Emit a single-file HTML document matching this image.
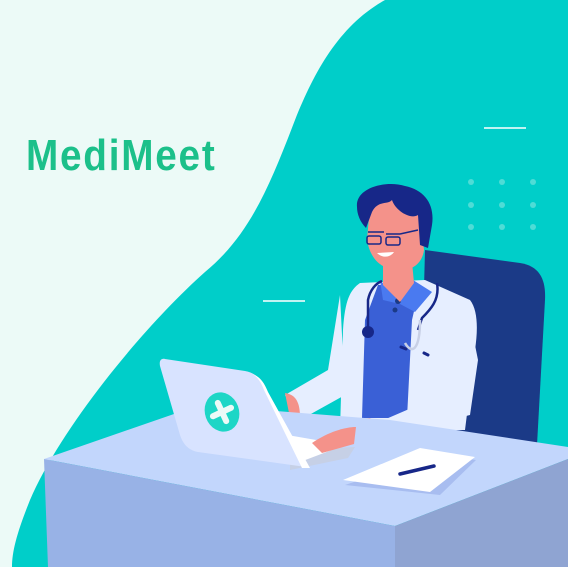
<!DOCTYPE html>
<html><head><style>html,body{margin:0;padding:0;width:568px;height:567px;overflow:hidden;background:#ecfaf7}
.logo{position:absolute;left:26px;top:130px;font-family:"Liberation Sans",sans-serif;font-weight:bold;font-size:44px;color:#1cc08a;letter-spacing:2px;transform:scaleX(0.88);transform-origin:left;line-height:52px}
</style></head><body>
<svg width="568" height="567" viewBox="0 0 568 567" style="position:absolute;left:0;top:0">
<path d="M385,0 C340,25 315,70 295,120 C270,185 250,235 205,272 C140,330 60,430 30,500 C18,530 12,550 12,567 L568,567 L568,0 Z" fill="#00cec9"/>
<line x1="484" y1="128" x2="526" y2="128" stroke="#fff" stroke-width="1.5"/>
<line x1="263" y1="301" x2="305" y2="301" stroke="#fff" stroke-width="1.5"/>
<g fill="#4fdcd6"><circle cx="471" cy="182" r="3"/><circle cx="502" cy="182" r="3"/><circle cx="533" cy="182" r="3"/><circle cx="471" cy="205" r="3"/><circle cx="502" cy="205" r="3"/><circle cx="533" cy="205" r="3"/><circle cx="471" cy="227" r="3"/><circle cx="502" cy="227" r="3"/><circle cx="533" cy="227" r="3"/></g>
<path d="M425,250 L520,263 C540,266 546,280 545,300 L537,445 L420,440 Z" fill="#1b3a87"/>
<path d="M360,283 L425,280 L470,300 C478,310 478,330 475,350 L465,430 L340,430 L343,330 C345,300 350,290 360,283 Z" fill="#e6eeff"/>
<path d="M378,285 L420,285 L412,320 L407,418 L362,418 L365,320 Z" fill="#3a60d6"/>
<path d="M380,280 L398,300 L413,280 L432,292 L415,312 L400,304 L383,300 Z" fill="#4a7af0"/>
<circle cx="398" cy="301" r="3" fill="#1b3a87"/><circle cx="395" cy="310" r="2.5" fill="#1b3a87"/>
<path d="M383,262 L412,262 L414,283 L400,302 L383,285 Z" fill="#f4928a"/>
<path d="M368,327 L368,300 C370,290 376,283 382,281 M437,283 C440,300 430,310 422,318 L418,330" fill="none" stroke="#172788" stroke-width="2.5"/>
<path d="M420,320 C420,350 412,355 405,343" fill="none" stroke="#c8d0e6" stroke-width="2.5"/>
<circle cx="368" cy="332" r="6" fill="#172788"/>
<line x1="401" y1="347" x2="406" y2="349" stroke="#172788" stroke-width="3" stroke-linecap="round"/>
<line x1="424" y1="353" x2="428" y2="355" stroke="#172788" stroke-width="3" stroke-linecap="round"/>
<path d="M340,295 L328,370 L285,395 L300,420 L345,395 Z" fill="#e6eeff"/>
<path d="M285,393 C300,395 300,410 300,420 L290,418 Z" fill="#f4928a"/>
<path d="M470,320 L478,360 L470,415 L430,425 L380,443 L372,425 L430,400 L440,345 Z" fill="#e6eeff"/>
<path d="M370,418 L348,420 L328,430 L305,448 L310,457 L345,450 L372,443 C380,436 378,423 370,418 Z" fill="#f4928a"/>
<path d="M370,205 C380,195 410,198 420,215 L424,250 C422,265 410,272 395,270 C380,268 370,258 367,240 Z" fill="#f4928a"/>
<path d="M357,207 C355,188 385,180 405,186 C425,190 435,205 432,225 L428,248 L420,245 L418,215 C410,220 395,210 392,200 C388,205 378,200 372,212 L366,228 C360,222 357,214 357,207 Z" fill="#172788"/>
<path d="M368,232 L384,232 M386,234 L400,234 M400,234 L418,230" stroke="#172788" stroke-width="1.5" fill="none"/>
<rect x="367" y="236" width="14" height="8" rx="2" fill="none" stroke="#172788" stroke-width="1.5"/>
<rect x="386" y="237" width="14" height="8" rx="2" fill="none" stroke="#172788" stroke-width="1.5"/>
<path d="M377,253 C382,258 390,258 394,252 Z" fill="#fff"/>
<path d="M44,459 L200,405 L390,420 L568,447 L568,459 L395,526 Z" fill="#c2d6fc"/>
<path d="M44,459 L395,526 L395,567 L48,567 Z" fill="#98b2e6"/>
<path d="M395,526 L568,459 L568,567 L395,567 Z" fill="#8fa4d2"/>
<path d="M345,485 L437,454 L476,460 L440,495 Z" fill="#a8bdf0"/>
<path d="M343,480 L420,448 L475,457 L430,492 Z" fill="#fff"/>
<line x1="400" y1="474" x2="434" y2="466" stroke="#172788" stroke-width="3.5" stroke-linecap="round"/>
<path d="M290,450 L355,447 L348,458 L290,470 Z" fill="#c6d0e6"/>
<path d="M270,432 L345,445 L300,462 L280,455 Z" fill="#fff"/>
<path d="M165,359 L245,371 C256,373 262,380 265,390 L306,467 L198,452 C188,450 183,444 180,435 L160,366 C159,361 161,358 165,359 Z" fill="#d8e3ff"/>
<path d="M253,374 C262,378 265,385 268,392 L310,468 L302,468 L264,390 C261,382 258,378 253,374 Z" fill="#fff"/>
<ellipse cx="222" cy="412" rx="17" ry="20" transform="rotate(-20 222 412)" fill="#1dd6c6"/>
<g transform="rotate(-25 222 412)"><path d="M222,402 L222,422 M212,412 L232,412" stroke="#ecfaf7" stroke-width="6" stroke-linecap="round"/></g>
<path d="M312,443 C328,432 345,427 356,427 L354,444 L322,453 Z" fill="#f4928a"/>
</svg>
<div class="logo">MediMeet</div>
</body></html>
